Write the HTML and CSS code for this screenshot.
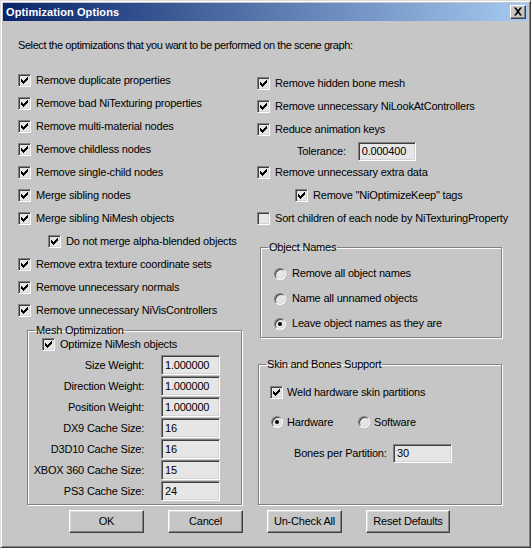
FILE: index.html
```html
<!DOCTYPE html>
<html>
<head>
<meta charset="utf-8">
<title>Optimization Options</title>
<link rel="stylesheet" href="styles.css">
</head>
<body>
<div class="window">
  <div class="titlebar">
    <span class="title">Optimization Options</span>
    <span class="close"><svg width="10" height="9" viewBox="0 0 10 9"><path d="M1 0.5h2l2 2.5 2-2.5h2L6 4.5l3 4H7L5 6 3 8.5H1l3-4z" fill="#000"/></svg></span>
  </div>
  <div class="body">
    <p class="intro">Select the optimizations that you want to be performed on the scene graph:</p>
    <div class="columns">
      <div class="col col-left">
        <ul class="checks">
          <li class="row"><span class="cb on"><svg viewBox="0 0 9 9"><path d="M1.5 3v3M2.5 4v3M3.5 5v3M4.5 4v3M5.5 3v3M6.5 2v3M7.5 1v3"/></svg></span>Remove duplicate properties</li>
          <li class="row"><span class="cb on"><svg viewBox="0 0 9 9"><path d="M1.5 3v3M2.5 4v3M3.5 5v3M4.5 4v3M5.5 3v3M6.5 2v3M7.5 1v3"/></svg></span>Remove bad NiTexturing properties</li>
          <li class="row"><span class="cb on"><svg viewBox="0 0 9 9"><path d="M1.5 3v3M2.5 4v3M3.5 5v3M4.5 4v3M5.5 3v3M6.5 2v3M7.5 1v3"/></svg></span>Remove multi-material nodes</li>
          <li class="row"><span class="cb on"><svg viewBox="0 0 9 9"><path d="M1.5 3v3M2.5 4v3M3.5 5v3M4.5 4v3M5.5 3v3M6.5 2v3M7.5 1v3"/></svg></span>Remove childless nodes</li>
          <li class="row"><span class="cb on"><svg viewBox="0 0 9 9"><path d="M1.5 3v3M2.5 4v3M3.5 5v3M4.5 4v3M5.5 3v3M6.5 2v3M7.5 1v3"/></svg></span>Remove single-child nodes</li>
          <li class="row"><span class="cb on"><svg viewBox="0 0 9 9"><path d="M1.5 3v3M2.5 4v3M3.5 5v3M4.5 4v3M5.5 3v3M6.5 2v3M7.5 1v3"/></svg></span>Merge sibling nodes</li>
          <li class="row"><span class="cb on"><svg viewBox="0 0 9 9"><path d="M1.5 3v3M2.5 4v3M3.5 5v3M4.5 4v3M5.5 3v3M6.5 2v3M7.5 1v3"/></svg></span>Merge sibling NiMesh objects</li>
          <li class="row sub-left"><span class="cb on"><svg viewBox="0 0 9 9"><path d="M1.5 3v3M2.5 4v3M3.5 5v3M4.5 4v3M5.5 3v3M6.5 2v3M7.5 1v3"/></svg></span>Do not merge alpha-blended objects</li>
          <li class="row"><span class="cb on"><svg viewBox="0 0 9 9"><path d="M1.5 3v3M2.5 4v3M3.5 5v3M4.5 4v3M5.5 3v3M6.5 2v3M7.5 1v3"/></svg></span>Remove extra texture coordinate sets</li>
          <li class="row"><span class="cb on"><svg viewBox="0 0 9 9"><path d="M1.5 3v3M2.5 4v3M3.5 5v3M4.5 4v3M5.5 3v3M6.5 2v3M7.5 1v3"/></svg></span>Remove unnecessary normals</li>
          <li class="row"><span class="cb on"><svg viewBox="0 0 9 9"><path d="M1.5 3v3M2.5 4v3M3.5 5v3M4.5 4v3M5.5 3v3M6.5 2v3M7.5 1v3"/></svg></span>Remove unnecessary NiVisControllers</li>
        </ul>
        <fieldset class="group mesh">
          <legend>Mesh Optimization</legend>
          <div class="mesh-check"><span class="cb on"><svg viewBox="0 0 9 9"><path d="M1.5 3v3M2.5 4v3M3.5 5v3M4.5 4v3M5.5 3v3M6.5 2v3M7.5 1v3"/></svg></span>Optimize NiMesh objects</div>
          <div class="fields">
            <span class="flabel">Size Weight:</span><span class="input">1.000000</span>
            <span class="flabel">Direction Weight:</span><span class="input">1.000000</span>
            <span class="flabel">Position Weight:</span><span class="input">1.000000</span>
            <span class="flabel">DX9 Cache Size:</span><span class="input">16</span>
            <span class="flabel">D3D10 Cache Size:</span><span class="input">16</span>
            <span class="flabel">XBOX 360 Cache Size:</span><span class="input">15</span>
            <span class="flabel">PS3 Cache Size:</span><span class="input">24</span>
          </div>
        </fieldset>
        <div class="buttons buttons-left">
          <span class="btn">OK</span>
          <span class="btn">Cancel</span>
        </div>
      </div>
      <div class="col col-right">
        <ul class="checks">
          <li class="row"><span class="cb on"><svg viewBox="0 0 9 9"><path d="M1.5 3v3M2.5 4v3M3.5 5v3M4.5 4v3M5.5 3v3M6.5 2v3M7.5 1v3"/></svg></span>Remove hidden bone mesh</li>
          <li class="row"><span class="cb on"><svg viewBox="0 0 9 9"><path d="M1.5 3v3M2.5 4v3M3.5 5v3M4.5 4v3M5.5 3v3M6.5 2v3M7.5 1v3"/></svg></span>Remove unnecessary NiLookAtControllers</li>
          <li class="row"><span class="cb on"><svg viewBox="0 0 9 9"><path d="M1.5 3v3M2.5 4v3M3.5 5v3M4.5 4v3M5.5 3v3M6.5 2v3M7.5 1v3"/></svg></span>Reduce animation keys</li>
          <li class="tol-row"><span class="tol-label">Tolerance:</span><span class="input tol">0.000400</span></li>
          <li class="row"><span class="cb on"><svg viewBox="0 0 9 9"><path d="M1.5 3v3M2.5 4v3M3.5 5v3M4.5 4v3M5.5 3v3M6.5 2v3M7.5 1v3"/></svg></span>Remove unnecessary extra data</li>
          <li class="row sub-right"><span class="cb on"><svg viewBox="0 0 9 9"><path d="M1.5 3v3M2.5 4v3M3.5 5v3M4.5 4v3M5.5 3v3M6.5 2v3M7.5 1v3"/></svg></span>Remove "NiOptimizeKeep" tags</li>
          <li class="row"><span class="cb"></span>Sort children of each node by NiTexturingProperty</li>
        </ul>
        <fieldset class="group names">
          <legend>Object Names</legend>
          <div class="radio-row"><span class="rb"></span>Remove all object names</div>
          <div class="radio-row"><span class="rb"></span>Name all unnamed objects</div>
          <div class="radio-row"><span class="rb on"></span>Leave object names as they are</div>
        </fieldset>
        <fieldset class="group skin">
          <legend>Skin and Bones Support</legend>
          <div class="weld"><span class="cb on"><svg viewBox="0 0 9 9"><path d="M1.5 3v3M2.5 4v3M3.5 5v3M4.5 4v3M5.5 3v3M6.5 2v3M7.5 1v3"/></svg></span>Weld hardware skin partitions</div>
          <div class="hw-row">
            <span class="hw-item hw-first"><span class="rb on"></span>Hardware</span>
            <span class="hw-item"><span class="rb"></span>Software</span>
          </div>
          <div class="bones-row"><span class="bones-label">Bones per Partition:</span><span class="input bones">30</span></div>
        </fieldset>
        <div class="buttons buttons-right">
          <span class="btn">Un-Check All</span>
          <span class="btn btn-wide">Reset Defaults</span>
        </div>
      </div>
    </div>
  </div>
</div>
</body>
</html>
```

FILE: styles.css
```css
* { box-sizing: border-box; }
html, body { margin: 0; padding: 0; background: #c6c6c6; }
body {
  font-family: "Liberation Sans", Arial, sans-serif;
  font-size: 11px;
  line-height: 13px;
  color: #000;
}
.window {
  width: 531px;
  height: 548px;
  background: #c6c6c6;
  border: 1px solid;
  border-color: #dcdcdc #404040 #404040 #dcdcdc;
  box-shadow: inset 1px 1px 0 #fff, inset -1px -1px 0 #808080;
  padding: 2px;
  display: flex;
  flex-direction: column;
}
.titlebar {
  height: 18px;
  flex: none;
  background: linear-gradient(to right, #0a246a, #a6caf0);
  display: flex;
  align-items: center;
  justify-content: space-between;
  padding: 0 2px 0 3px;
}
.title {
  color: #fff;
  font-weight: bold;
  font-size: 11px;
  letter-spacing: 0.1px;
}
.close {
  width: 16px;
  height: 14px;
  background: #c6c6c6;
  border: 1px solid;
  border-color: #fff #404040 #404040 #fff;
  box-shadow: inset -1px -1px 0 #808080;
  display: flex;
  align-items: center;
  justify-content: center;
  padding: 0 1px 1px 0;
}
.close svg { display: block; }
.body {
  flex: 1;
  padding: 18px 0 0 15px;
  display: flex;
  flex-direction: column;
  letter-spacing: -0.2px;
}
.intro { margin: 0; height: 13px; white-space: nowrap; letter-spacing: -0.42px; }
.columns {
  margin-top: 17px;
  display: grid;
  grid-template-columns: 225px 245px;
  column-gap: 14px;
  align-items: stretch;
}
.col { display: flex; flex-direction: column; }
.col-right { padding-top: 3px; }
.checks { list-style: none; margin: 0; padding: 0; }
.row {
  height: 23px;
  display: flex;
  align-items: center;
  white-space: nowrap;
}
.row .cb { margin-right: 5px; }
.sub-left { padding-left: 30px; }
.sub-right { padding-left: 38px; }
.cb {
  width: 13px;
  height: 13px;
  flex: none;
  display: inline-block;
  border: 1px solid;
  border-color: #808080 #fff #fff #808080;
  box-shadow: inset 1px 1px 0 #404040, inset -1px -1px 0 #d4d4d4;
  background: #e6e6e6;
}
.cb svg {
  display: block;
  width: 9px;
  height: 9px;
  margin: 1px;
  fill: none;
  stroke: #000;
  stroke-width: 1;
  shape-rendering: crispEdges;
}
.rb {
  width: 12px;
  height: 12px;
  flex: none;
  display: inline-block;
  border-radius: 50%;
  border: 1px solid;
  border-color: #808080 #fff #fff #808080;
  box-shadow: inset 1px 1px 0 #404040, inset -1px -1px 0 #d4d4d4;
  background: #e6e6e6;
  position: relative;
}
.rb.on::after {
  content: "";
  position: absolute;
  left: 3px;
  top: 3px;
  width: 4px;
  height: 4px;
  border-radius: 50%;
  background: #000;
}
.input {
  display: flex;
  align-items: center;
  height: 20px;
  width: 59px;
  padding-left: 3px;
  background: #e6e6e6;
  border: 1px solid;
  border-color: #808080 #fff #fff #808080;
  box-shadow: inset 1px 1px 0 #404040, inset -1px -1px 0 #d4d4d4;
}
.group {
  margin: 0;
  padding: 0;
  border: 1px solid #808080;
  box-shadow: 1px 1px 0 #fff, inset 1px 1px 0 #fff;
  min-width: 0;
}
.group legend {
  padding: 0 1px;
  line-height: 13px;
  white-space: nowrap;
}
.mesh {
  margin: 2px 0 0 9px;
  width: 215px;
  padding: 0 0 3px 14px;
}
.mesh legend { margin-left: -7px; }
.mesh-check {
  height: 14px;
  display: flex;
  align-items: center;
}
.mesh-check .cb { margin-right: 5px; }
.fields {
  margin-top: 4px;
  display: grid;
  grid-template-columns: 102px 59px;
  grid-auto-rows: 20px;
  row-gap: 1px;
  column-gap: 17px;
  margin-left: -14px;
  padding-left: 14px;
}
.flabel {
  display: flex;
  align-items: center;
  justify-content: flex-end;
  white-space: nowrap;
}
.buttons {
  display: flex;
  gap: 24px;
  margin-top: 5px;
}
.buttons-left { padding-left: 51px; }
.buttons-right { padding-left: 10px; margin-top: 5px; }
.btn {
  width: 75px;
  height: 23px;
  display: flex;
  align-items: center;
  justify-content: center;
  background: #c6c6c6;
  border: 1px solid;
  border-color: #fff #404040 #404040 #fff;
  box-shadow: inset -1px -1px 0 #808080, inset 1px 1px 0 #dcdcdc;
}
.btn-wide { width: 84px; }
.tol-row {
  height: 20px;
  display: flex;
  align-items: center;
  padding-left: 40px;
}
.tol-label { margin-right: 12px; }
.input.tol { width: 58px; height: 19px; }
.names {
  margin: 11px 0 0 3px;
  width: 242px;
  padding: 7px 0 1px 13px;
}
.names legend { margin-left: -6px; }
.radio-row {
  height: 25px;
  display: flex;
  align-items: center;
  white-space: nowrap;
}
.radio-row .rb { margin-right: 6px; }
.skin {
  margin: 20px 0 0 1px;
  width: 244px;
  flex: 1;
  padding: 9px 0 0 11px;
}
.skin legend { margin-left: -4px; }
.weld {
  height: 24px;
  display: flex;
  align-items: center;
}
.weld .cb { margin-right: 4px; }
.hw-row {
  margin-top: 6px;
  height: 24px;
  display: flex;
  align-items: center;
  padding-left: 1px;
}
.hw-item { display: flex; align-items: center; }
.hw-item .rb { margin-right: 4px; }
.hw-first { width: 87px; }
.bones-row {
  margin-top: 9px;
  height: 20px;
  display: flex;
  align-items: center;
  padding-left: 24px;
}
.bones-label { width: 99px; white-space: nowrap; }
.input.bones { height: 19px; }
```
